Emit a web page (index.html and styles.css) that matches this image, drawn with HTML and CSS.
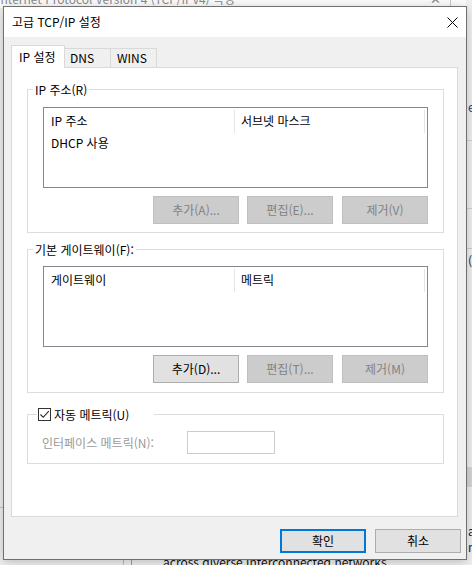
FILE: index.html
```html
<!DOCTYPE html>
<html lang="ko">
<head>
<meta charset="utf-8">
<title>고급 TCP/IP 설정</title>
<link rel="stylesheet" href="styles.css">
</head>
<body>
<div class="desktop">
  <div class="back-titlebar">
    <span class="back-title">Internet Protocol Version 4 (TCP/IPv4) 속성</span>
    <span class="back-close">✕</span>
    <span class="back-line"></span>
  </div>
  <div class="back-right">
    <span class="br-line l1"></span>
    <span class="br-char c1">e</span>
    <span class="br-line l2"></span>
    <span class="br-line l3"></span>
    <span class="br-char c2">(</span>
    <span class="br-box"></span>
    <span class="br-char c3">a</span>
    <span class="br-char c4">n</span>
  </div>
  <span class="back-vline v1"></span>
  <span class="back-vline v2"></span>
  <span class="back-hline"></span>
  <p class="back-text">across diverse interconnected networks.</p>

  <div class="dialog">
    <div class="titlebar">
      <span class="title">고급 TCP/IP 설정</span>
      <svg class="close" width="11" height="11" viewBox="0 0 11 11">
        <path d="M0.5 0.5 L10.5 10.5 M10.5 0.5 L0.5 10.5" stroke="#000" stroke-width="1" fill="none"/>
      </svg>
    </div>
    <div class="dlg-body">
      <div class="tabs">
        <div class="tab active">IP 설정</div>
        <div class="tab dns">DNS</div>
        <div class="tab wins">WINS</div>
      </div>
      <div class="panel">
        <fieldset class="group g1">
          <legend>IP 주소(R)</legend>
          <div class="g-inner">
            <div class="list">
              <div class="list-head">
                <div class="col c1">IP 주소</div>
                <div class="col c2">서브넷 마스크</div>
              </div>
              <div class="list-row">DHCP 사용</div>
            </div>
            <div class="btn-row">
              <button class="btn" disabled>추가(A)...</button>
              <button class="btn" disabled>편집(E)...</button>
              <button class="btn third" disabled>제거(V)</button>
            </div>
          </div>
        </fieldset>

        <fieldset class="group g2">
          <legend>기본 게이트웨이(F):</legend>
          <div class="g-inner">
            <div class="list">
              <div class="list-head">
                <div class="col c1">게이트웨이</div>
                <div class="col c2">메트릭</div>
              </div>
            </div>
            <div class="btn-row">
              <button class="btn">추가(D)...</button>
              <button class="btn" disabled>편집(T)...</button>
              <button class="btn third" disabled>제거(M)</button>
            </div>
          </div>
        </fieldset>

        <fieldset class="group g3">
          <legend class="check-legend">
            <span class="checkbox">
              <svg width="11" height="11" viewBox="0 0 11 11">
                <path d="M1.5 5.5 L4.2 8.3 L9.8 2.2" stroke="#222" stroke-width="1.1" fill="none"/>
              </svg>
            </span>
            <span>자동 메트릭(U)</span>
          </legend>
          <div class="g3-inner">
            <span class="dis-label">인터페이스 메트릭(N):</span>
            <span class="textbox"></span>
          </div>
        </fieldset>
      </div>
      <div class="footer">
        <button class="btn default">확인</button>
        <button class="btn">취소</button>
      </div>
    </div>
  </div>
</div>
</body>
</html>
```
FILE: styles.css
```css
* { box-sizing: border-box; }
html, body { margin: 0; padding: 0; }
body {
  width: 472px;
  height: 565px;
  overflow: hidden;
  background: #f0f0f0;
  font-family: "Noto Sans CJK KR", "Noto Sans", sans-serif;
  font-size: 12px;
  color: #000;
}
.desktop {
  position: relative;
  width: 472px;
  height: 565px;
  overflow: hidden;
  background: #f0f0f0;
}

/* background window pieces */
.back-titlebar {
  position: absolute;
  left: 0; top: 0;
  width: 472px; height: 8px;
  background: #fbfbfb;
  overflow: hidden;
}
.back-title {
  position: absolute;
  left: -3px; top: -9px;
  line-height: 16px;
  color: #8a8a8a;
  white-space: nowrap;
}
.back-close {
  position: absolute;
  left: 430px; top: -9px;
  line-height: 16px;
  color: #8a8a8a;
  font-size: 13px;
}
.back-line {
  position: absolute;
  left: 450px; top: 0;
  width: 1px; height: 8px;
  background: #c8c8c8;
}
.back-right {
  position: absolute;
  left: 466px; top: 0;
  width: 6px; height: 565px;
  background: #f0f0f0;
}
.br-line { position: absolute; left: 0; width: 6px; height: 1px; background: #d0d0d0; }
.br-line.l1 { top: 140px; }
.br-line.l2 { top: 208px; }
.br-line.l3 { top: 248px; }
.br-char { position: absolute; left: 2px; line-height: 13px; color: #222; }
.br-char.c1 { top: 100px; color: #3a3a7a; }
.br-char.c2 { top: 254px; }
.br-char.c3 { top: 524px; }
.br-char.c4 { top: 540px; }
.br-box { position: absolute; left: 0; top: 467px; width: 6px; height: 20px; background: #d6d6d6; }
.back-vline { position: absolute; top: 555px; width: 1px; height: 10px; background: #bdbdbd; }
.back-vline.v1 { left: 123px; }
.back-vline.v2 { left: 131px; background: #a0a0a0; }
.back-hline { position: absolute; left: 0; top: 507px; width: 4px; height: 1px; background: #c8c8c8; }
.back-text {
  position: absolute;
  margin: 0;
  left: 163px; top: 554px;
  line-height: 16px;
  color: #111;
  white-space: nowrap;
}

/* dialog */
.dialog {
  position: absolute;
  left: 3px; top: 6px;
  width: 464px; height: 554px;
  border: 1px solid #707070;
  background: #f0f0f0;
  display: flex;
  flex-direction: column;
  box-shadow: 0 2px 10px rgba(0, 0, 0, 0.22);
}
.titlebar {
  flex: none;
  height: 30px;
  background: #fff;
  display: flex;
  align-items: center;
  justify-content: space-between;
  padding: 0 8px 0 8px;
}
.title { line-height: 16px; }
.close { display: block; margin-top: 0; }

.dlg-body {
  flex: 1;
  display: flex;
  flex-direction: column;
  padding: 8px 5px 0 7px;
}
.tabs {
  display: flex;
  align-items: flex-end;
  height: 23px;
  margin-bottom: -1px;
}
.tab {
  border: 1px solid #d9d9d9;
  border-bottom: none;
  background: #f0f0f0;
  display: flex;
  align-items: center;
  line-height: 16px;
}
.tab.active {
  width: 54px;
  height: 23px;
  background: #fff;
  padding: 0 0 1px 7px;
  position: relative;
  z-index: 1;
}
.tab.dns, .tab.wins {
  width: 47px;
  height: 19px;
  margin-left: -1px;
  margin-bottom: 1px;
}
.tab.dns { padding-left: 5px; }
.tab.wins { padding-left: 6px; }

.panel {
  width: 447px;
  height: 450px;
  border: 1px solid #d9d9d9;
  background: #fff;
  padding: 13px 13px 0 15px;
}

.group {
  margin: 0;
  padding: 0;
  min-width: 0;
  border: 1px solid #dcdcdc;
}
.group legend {
  margin-left: 5px;
  padding: 0 2px;
  height: 17px;
  line-height: 17px;
}
.g1 { height: 152px; }
.g2 { margin-top: 8px; height: 152px; }
.g3 { margin-top: 13px; height: 58px; }

.g1 .g-inner { padding: 9px 15px 0 15px; }
.g2 .g-inner { padding: 8px 15px 0 15px; }

.list {
  height: 81px;
  border: 1px solid #828790;
  background: #fff;
}
.list-head {
  display: flex;
  height: 25px;
}
.col {
  margin-top: 2px;
  height: 23px;
  line-height: 21px;
  border-right: 1px solid #e5e5e5;
  white-space: nowrap;
}
.col.c1 { width: 191px; padding-left: 7px; }
.col.c2 { width: 190px; padding-left: 6px; }
.list-row {
  line-height: 19px;
  padding-left: 7px;
}

.btn-row {
  display: flex;
  justify-content: flex-end;
  gap: 8px;
  margin-top: 8px;
}
.btn-row .third { margin-left: 1px; }

.btn {
  width: 86px;
  height: 28px;
  margin: 0;
  padding: 0;
  font-family: inherit;
  font-size: 12px;
  line-height: 16px;
  color: #000;
  background: #e1e1e1;
  border: 1px solid #adadad;
  border-radius: 0;
}
.btn:disabled {
  color: #838383;
  background: #cccccc;
  border-color: #bfbfbf;
}

.check-legend.check-legend {
  margin-left: 9px;
  padding: 0 0 0 1px;
  width: 117px;
  display: flex;
  align-items: center;
  gap: 3px;
}
.checkbox {
  width: 13px;
  height: 13px;
  border: 1px solid #333;
  background: #fff;
  display: flex;
  align-items: center;
  justify-content: center;
}
.checkbox svg { display: block; }

.g3-inner {
  display: flex;
  align-items: center;
  padding: 8px 0 0 14px;
}
.dis-label {
  width: 145px;
  flex: none;
  color: #9a9a9a;
  line-height: 16px;
  white-space: nowrap;
}
.textbox {
  width: 88px;
  height: 23px;
  border: 1px solid #cccccc;
  background: #fff;
}

.footer {
  display: flex;
  justify-content: flex-end;
  gap: 9px;
  margin-top: 12px;
}
.footer .btn { height: 24px; }
.btn.default {
  border: 2px solid #0078d7;
}
```
